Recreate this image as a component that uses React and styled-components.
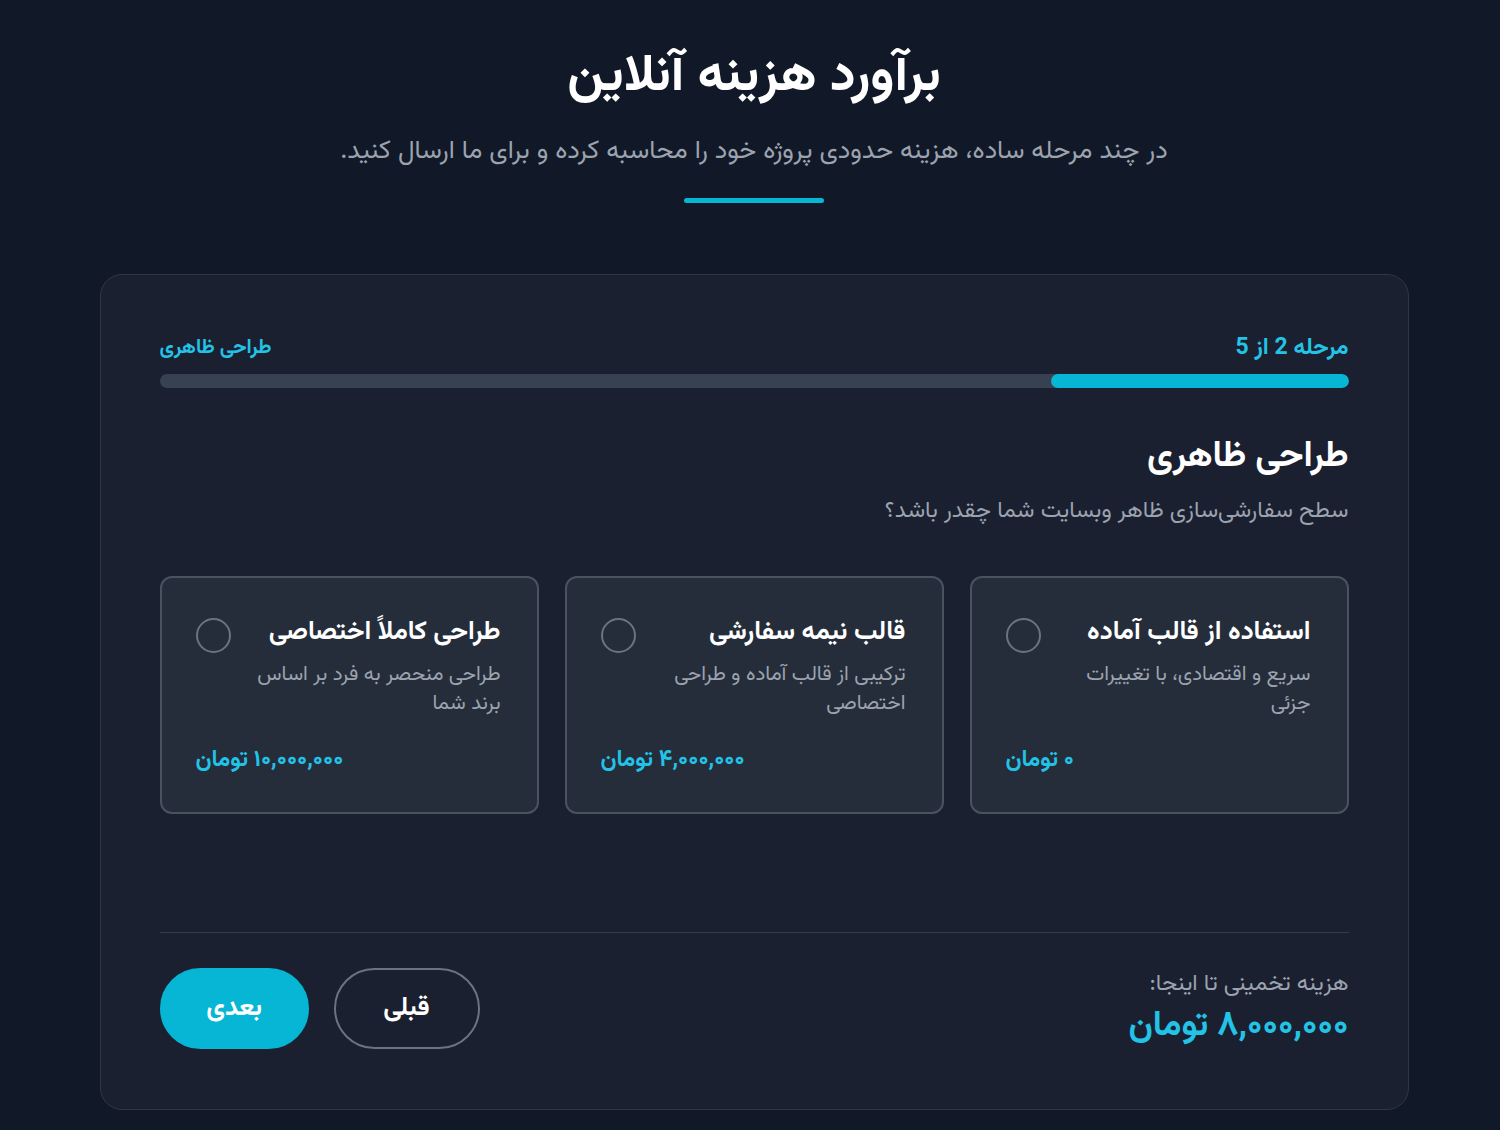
import React, { useState } from "react";
import styled, { createGlobalStyle } from "styled-components";

const FONT = `"Vazirmatn", "Noto Sans Arabic", "Noto Naskh Arabic", "DejaVu Sans", sans-serif`;

const Global = createGlobalStyle`
  html, body { margin: 0; padding: 0; background: #111827; }
  body { font-family: ${FONT}; color: #fff; }
  * { box-sizing: border-box; }
`;

const Page = styled.div`
  direction: rtl;
  min-height: 1130px;
  background: #111827;
  display: flex;
  flex-direction: column;
  align-items: center;
  padding: 48px 0 0 8px;
`;

const Header = styled.header`
  display: flex;
  flex-direction: column;
  align-items: center;
`;

const Title = styled.h1`
  margin: 0;
  font-size: 52px;
  font-weight: 700;
  line-height: 60px;
  color: #ffffff;
`;

const Subtitle = styled.p`
  margin: 29px 0 0;
  font-size: 26px;
  line-height: 30px;
  color: #9ca3af;
`;

const Accent = styled.div`
  width: 140px;
  height: 5px;
  border-radius: 3px;
  background: #06b6d4;
  margin-top: 31px;
`;

const Card = styled.section`
  width: 1309px;
  margin-top: 71px;
  background: #1a2030;
  border: 1px solid #2f3746;
  border-radius: 22px;
  padding: 58px 59px 60px;
  display: flex;
  flex-direction: column;
`;

const StepRow = styled.div`
  display: flex;
  justify-content: space-between;
  align-items: center;
  color: #22c3e6;
  font-weight: 700;
`;

const StepText = styled.span`
  font-size: ${(p) => p.$size}px;
  line-height: 30px;
`;

const Track = styled.div`
  margin-top: 11px;
  height: 14px;
  border-radius: 7px;
  background: #374151;
  overflow: hidden;
  display: flex;
`;

const Fill = styled.div`
  height: 100%;
  border-radius: 7px;
  background: #06b6d4;
`;

const SectionTitle = styled.h2`
  margin: 47px 0 0;
  font-size: 36px;
  line-height: 44px;
  font-weight: 700;
  color: #fff;
`;

const SectionDesc = styled.p`
  margin: 17px 0 0;
  font-size: 23px;
  line-height: 30px;
  color: #9ca3af;
`;

const Options = styled.div`
  margin-top: 50px;
  display: grid;
  grid-template-columns: repeat(3, 1fr);
  gap: 26px;
`;

const Option = styled.button`
  font-family: ${FONT};
  direction: rtl;
  text-align: right;
  background: #252d3b;
  border: 2px solid ${(p) => (p.$active ? "#06b6d4" : "#4a5261")};
  border-radius: 12px;
  height: 238px;
  padding: 37px 36px 0 34px;
  display: flex;
  flex-direction: column;
  cursor: pointer;
  color: inherit;
`;

const OptionTop = styled.div`
  display: flex;
  align-items: flex-start;
  gap: 18px;
`;

const OptionBody = styled.div`
  flex: 1;
  display: flex;
  flex-direction: column;
`;

const OptionTitle = styled.div`
  font-size: 26px;
  font-weight: 700;
  line-height: 36px;
  color: #fff;
`;

const OptionDesc = styled.div`
  margin-top: 10px;
  font-size: 20.5px;
  line-height: 29px;
  color: #9ca3af;
  min-height: 58px;
`;

const OptionPrice = styled.div`
  margin-top: 26px;
  align-self: flex-end;
  font-size: 23px;
  font-weight: 700;
  line-height: 30px;
  color: #22c3e6;
`;

const Radio = styled.span`
  flex: none;
  width: 35px;
  height: 35px;
  margin-top: 3px;
  border-radius: 50%;
  border: 2px solid ${(p) => (p.$active ? "#06b6d4" : "#6b7280")};
  display: flex;
  align-items: center;
  justify-content: center;
  &::after {
    content: "";
    width: 17px;
    height: 17px;
    border-radius: 50%;
    background: ${(p) => (p.$active ? "#06b6d4" : "transparent")};
  }
`;

const Divider = styled.hr`
  margin: 118px 0 0;
  border: 0;
  border-top: 1px solid #343c4b;
`;

const Footer = styled.div`
  margin-top: 35px;
  display: flex;
  justify-content: space-between;
  align-items: center;
`;

const Estimate = styled.div`
  display: flex;
  flex-direction: column;
  gap: 6px;
`;

const EstimateLabel = styled.span`
  font-size: 23px;
  line-height: 30px;
  color: #9ca3af;
`;

const EstimateValue = styled.span`
  font-size: 35px;
  line-height: 44px;
  font-weight: 700;
  color: #22c3e6;
`;

const Buttons = styled.div`
  display: flex;
  gap: 25px;
`;

const Btn = styled.button`
  font-family: ${FONT};
  height: 81px;
  width: ${(p) => (p.$primary ? 149 : 146)}px;
  border-radius: 41px;
  font-size: 26px;
  font-weight: 700;
  cursor: pointer;
  color: #fff;
  background: ${(p) => (p.$primary ? "#06b6d4" : "transparent")};
  border: 2px solid ${(p) => (p.$primary ? "#06b6d4" : "#6b7280")};
`;

const options = [
  { title: "استفاده از قالب آماده", desc: "سریع و اقتصادی، با تغییرات جزئی", price: "۰ تومان" },
  { title: "قالب نیمه سفارشی", desc: "ترکیبی از قالب آماده و طراحی اختصاصی", price: "۴,۰۰۰,۰۰۰ تومان" },
  { title: "طراحی کاملاً اختصاصی", desc: "طراحی منحصر به فرد بر اساس برند شما", price: "۱۰,۰۰۰,۰۰۰ تومان" },
];

export default function App() {
  const [selected, setSelected] = useState(null);
  const progress = 25;
  return (
    <>
      <Global />
      <Page>
        <Header>
          <Title>برآورد هزینه آنلاین</Title>
          <Subtitle>در چند مرحله ساده، هزینه حدودی پروژه خود را محاسبه کرده و برای ما ارسال کنید.</Subtitle>
          <Accent />
        </Header>
        <Card>
          <StepRow>
            <StepText $size={23}>مرحله 2 از 5</StepText>
            <StepText $size={20}>طراحی ظاهری</StepText>
          </StepRow>
          <Track>
            <Fill style={{ width: `${progress}%` }} />
          </Track>
          <SectionTitle>طراحی ظاهری</SectionTitle>
          <SectionDesc>سطح سفارشی‌سازی ظاهر وبسایت شما چقدر باشد؟</SectionDesc>
          <Options>
            {options.map((o, i) => (
              <Option key={i} $active={selected === i} onClick={() => setSelected(i)}>
                <OptionTop>
                  <OptionBody>
                    <OptionTitle>{o.title}</OptionTitle>
                    <OptionDesc>{o.desc}</OptionDesc>
                  </OptionBody>
                  <Radio $active={selected === i} />
                </OptionTop>
                <OptionPrice>{o.price}</OptionPrice>
              </Option>
            ))}
          </Options>
          <Divider />
          <Footer>
            <Estimate>
              <EstimateLabel>هزینه تخمینی تا اینجا:</EstimateLabel>
              <EstimateValue>۸,۰۰۰,۰۰۰ تومان</EstimateValue>
            </Estimate>
            <Buttons>
              <Btn>قبلی</Btn>
              <Btn $primary>بعدی</Btn>
            </Buttons>
          </Footer>
        </Card>
      </Page>
    </>
  );
}
